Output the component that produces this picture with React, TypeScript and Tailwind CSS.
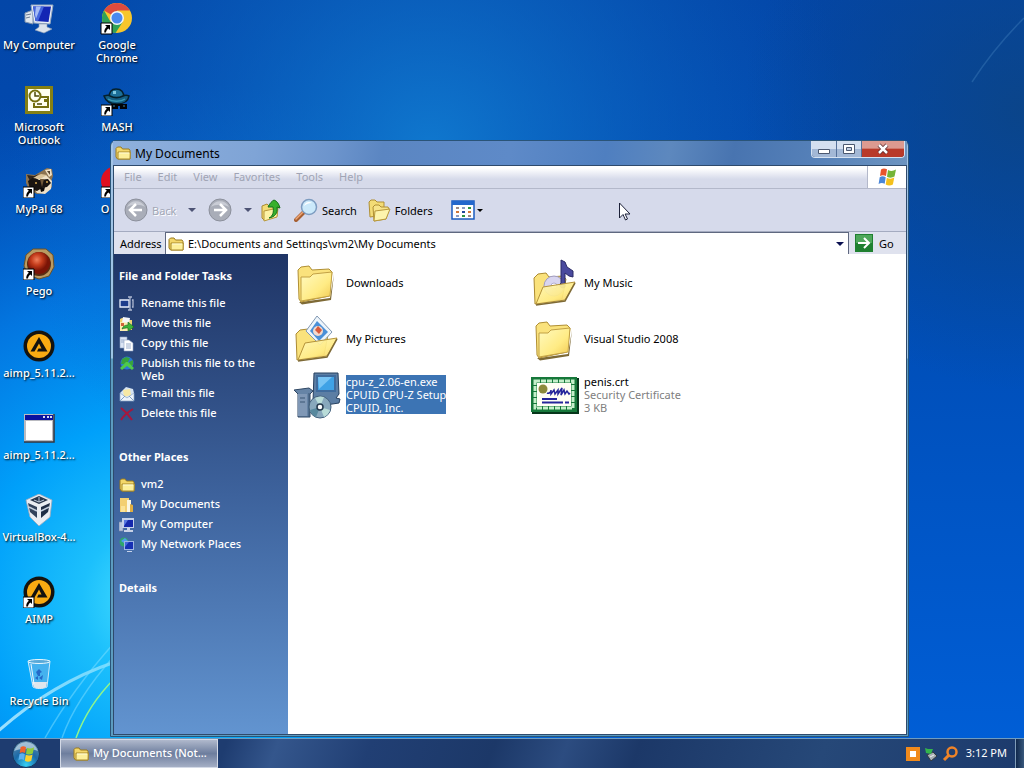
import type { ReactNode } from "react";

type IconProps = { className?: string };

/* ---------- desktop icons ---------- */

const ShortcutArrow = () => (
  <g>
    <path d="M0 21h11v11H0z" fill="#fff" stroke="#000" strokeWidth="1" />
    <path d="M4 23h5v5l-1.600-1.600C6 27.500 5.200 28.600 5 30.400H3.200c0-2.400.8-4.200 2.600-5.600z" fill="#000" />
  </g>
);

const MonitorIcon = () => (
  <svg viewBox="0 0 32 32" className="size-8" aria-hidden="true">
    <path d="M2 11l8-3v14l-8-2z" fill="#dfe6ee" stroke="#7f93ad" />
    <path d="M3 13l5-1M3 16l4-1" stroke="#6d7d94" />
    <path d="M8 3l22 0-3 19-16-1z" fill="#e6edf5" stroke="#93a6c0" />
    <path d="M10 4.500l18 0-2.500 15.500-13-1z" fill="#1426b4" />
    <path d="M10 4.500h11l-6 14.700-2.500-.2z" fill="#4466dc" />
    <path d="M13 4.500h5l-5 12-1-4z" fill="#a7bdf5" />
    <path d="M16 22l8 0 0 3 5 2-8 4-9-3 4-3z" fill="#dbe3ec" stroke="#8b9cb3" strokeWidth=".6" />
  </svg>
);

const ChromeIcon = () => (
  <svg viewBox="0 0 32 32" className="size-8 overflow-visible" aria-hidden="true">
    <circle cx="16" cy="16" r="15" fill="#f6c62c" />
    <path d="M16 16L3 8.500A15 15 0 0 1 29 8.500H16z" fill="#dd4b3e" />
    <path d="M3 8.500A15 15 0 0 0 14.500 31L22 19.500 16 16 9.500 19.700z" fill="#30a257" />
    <circle cx="16" cy="16" r="7" fill="#f4f6f4" />
    <circle cx="16" cy="16" r="5.500" fill="#4a8af0" />
    <ShortcutArrow />
  </svg>
);

const OutlookIcon = () => (
  <svg viewBox="0 0 32 32" className="size-8" aria-hidden="true">
    <path d="M2 2h28v28H2z" fill="#858014" />
    <path d="M5 5h22v22H5z" fill="#fffff0" />
    <path d="M17 13h8v10H11v-4" fill="#fffff0" stroke="#75700f" strokeWidth="2" />
    <circle cx="12" cy="12" r="5.500" fill="#fffff0" stroke="#75700f" strokeWidth="2" />
    <path d="M12 8v4h4M14 20h5" stroke="#4d4a09" strokeWidth="1.500" fill="none" />
    <path d="M21 15h3v3h-3z" fill="#75700f" />
  </svg>
);

const MashIcon = () => (
  <svg viewBox="0 0 32 32" className="size-8" aria-hidden="true">
    <path d="M8 14c0-6 2-9 7-9s8 3 8 9z" fill="#1c6f98" stroke="#05202c" strokeWidth="1.500" />
    <path d="M3 12c3-1 5-1 6 0 4 2 9 2 13 0 2-1 4-1 6 0-1 6-6 8-12 8S5 18 3 12z" fill="#155f84" stroke="#05202c" strokeWidth="1.500" />
    <path d="M7 15c4 3 13 3 17 0" stroke="#3a9ab4" strokeWidth="1.500" fill="none" />
    <path d="M12 7h3v3h-3z" fill="#7fc8e0" />
    <path d="M10 20h7v5h-7zM19 20h7v5h-7zM16 20h4v2h-4z" fill="#020408" />
    <path d="M12 22h2M22 22h2" stroke="#3e86a0" />
    <ShortcutArrow />
  </svg>
);

const RaccoonIcon = () => (
  <svg viewBox="0 0 32 32" className="size-8" aria-hidden="true">
    <path d="M3 8l9 1 12-7 5 1 1 7-2 6 1 5-7 6-8 1-8-4-3-7z" fill="#8c7351" />
    <path d="M4 9l7 1 5-2-9 7z" fill="#30251c" />
    <path d="M22 4l6-1 1 6-3 2z" fill="#f0e0c4" />
    <path d="M24 5l3 0 0 4z" fill="#5a4630" />
    <path d="M7 16l7-6 9-1 6 6-1 8-6 5-8-1z" fill="#efe1c7" />
    <path d="M5 15l6-4 5 3 9-1 3 4-4 4-5 1-5 3-7-2z" fill="#191411" />
    <path d="M10 12l8-4 6 1-7 4z" fill="#d9c298" />
    <path d="M17 13l2 8 2-8z" fill="#6f5738" />
    <circle cx="13" cy="17" r="1" fill="#d6a852" />
    <circle cx="24" cy="16" r="1" fill="#d6a852" />
    <path d="M17 22l5-1-1 4-3 1z" fill="#0b0908" />
    <ShortcutArrow />
  </svg>
);

const OperaIcon = () => (
  <svg viewBox="0 0 32 32" className="size-8" aria-hidden="true">
    <ellipse cx="16" cy="15" rx="16" ry="15" fill="#e0101f" />
    <ellipse cx="16" cy="15" rx="6" ry="11" fill="#fff" />
    <ShortcutArrow />
  </svg>
);

const PegoIcon = () => (
  <svg viewBox="0 0 32 32" className="size-8" aria-hidden="true">
    <defs>
      <radialGradient id="pego" cx=".4" cy=".35">
        <stop offset="0" stopColor="#f0805c" />
        <stop offset=".5" stopColor="#c43c1c" />
        <stop offset="1" stopColor="#7a1406" />
      </radialGradient>
    </defs>
    <path d="M10 1h13l7 6 1 12-5 9-10 3-11-4-4-9 2-11z" fill="#b99a62" stroke="#6b5127" />
    <circle cx="16" cy="16" r="12" fill="#5a2c12" />
    <circle cx="16" cy="15" r="11" fill="url(#pego)" />
    <ShortcutArrow />
  </svg>
);

const AimpIcon = ({ shortcut = false }: { shortcut?: boolean }) => (
  <svg viewBox="0 0 32 32" className="size-8" aria-hidden="true">
    <circle cx="16" cy="16" r="15.500" fill="#14130f" />
    <circle cx="16" cy="16" r="12" fill="#f9ab12" />
    <path d="M16 7l8.500 14.500H14l1.500-3h3L16 13.500 11.500 21.500h-4z" fill="#14130f" />
    {shortcut && <ShortcutArrow />}
  </svg>
);

const WindowIcon = () => (
  <svg viewBox="0 0 32 32" className="size-8" aria-hidden="true">
    <path d="M1 2h30v28H1z" fill="#b9bac0" />
    <path d="M31 2v28H1" fill="none" stroke="#33363f" strokeWidth="1.500" />
    <path d="M2 3h28v5H2z" fill="#0a12a0" />
    <path d="M3 9h26v19H3z" fill="#fff" />
    <path d="M20 4h2v2h-2zM24 4h2v2h-2zM27 4h2v2h-2z" fill="#d8dcf0" />
  </svg>
);

const VirtualBoxIcon = () => (
  <svg viewBox="0 0 32 32" className="size-8" aria-hidden="true">
    <path d="M16 0l13 6-2 17-11 9-9-9L3 6z" fill="#e9edf3" stroke="#9caabd" strokeWidth=".8" />
    <path d="M7 6l9-4 9 4-9 4z" fill="#28374d" />
    <path d="M5 9l9 4v11l-7-6z" fill="#31425c" />
    <path d="M27 9l-9 4v11l7-6z" fill="#1e2d46" />
    <path d="M11 6l5 2 5-2M16 3v5" stroke="#b8c6d8" fill="none" />
    <path d="M6 13l8 4M26 13l-8 4" stroke="#c3cfdf" strokeWidth="1.500" />
  </svg>
);

const RecycleIcon = () => (
  <svg viewBox="0 0 32 32" className="size-8" aria-hidden="true">
    <path d="M5 3l22 0-3 26c-4 2-11 2-14 0z" fill="#5cb4ea" fillOpacity=".7" stroke="#cfeafa" strokeWidth="1" />
    <path d="M9 24h15l-1 5c-4 2-9 2-12 0z" fill="#dfe6ec" />
    <ellipse cx="16" cy="3.500" rx="11" ry="2" fill="#58a9d8" stroke="#e9f8ff" />
    <path d="M8 6l3 20" stroke="#eefaff" strokeWidth="1" />
    <path d="M13 14l3-3 3 3-2 1v3h-2zM12 20l3-2v4zM20 17l-1 5-3-2z" fill="#2469c8" />
  </svg>
);

/* ---------- folder / toolbar icons ---------- */

const FolderSmall = ({ className = "size-4 shrink-0" }: IconProps) => (
  <svg viewBox="0 0 16 16" className={className} aria-hidden="true">
    <path d="M1 3.500L2.500 2H6l1.500 2H14l1 1.500V14H2.500L1 12z" fill="#f3d76a" stroke="#9a7a1e" />
    <path d="M3 7h12.300L15 14H3z" fill="#fdf09a" stroke="#a98a2a" />
    <path d="M4 8h10" stroke="#fffbd8" />
  </svg>
);

const FolderGradient = ({ id }: { id: string }) => (
  <defs>
    <linearGradient id={id} x1="0" y1="0" x2="1" y2="1">
      <stop offset="0" stopColor="#fffac0" />
      <stop offset=".6" stopColor="#ffeb84" />
      <stop offset="1" stopColor="#f0c850" />
    </linearGradient>
  </defs>
);

const FolderLarge = ({ id }: { id: string }) => (
  <svg viewBox="-1 -2 48 48" className="size-12" aria-hidden="true">
    <FolderGradient id={id} />
    <path d="M5 41l3 2.500 29-4.500 3-26-4 24-29 4z" fill="#7e6a36" />
    <path d="M5 38L4 9l3-3 8-1 3 4 17-1 3 3-3 24L7 41z" fill="#fae27c" stroke="#b08f34" />
    <path d="M7 16h9l3-3 19-2-2 24-29 5z" fill={`url(#${id})`} stroke="#c2a145" />
  </svg>
);

const OpenFolder = ({ children, id }: { children: ReactNode; id: string }) => (
  <svg viewBox="0 0 48 48" className="size-12" aria-hidden="true">
    <FolderGradient id={id} />
    <path d="M4 45L3 19l4-4 8-1 3 4 14-1 3 3-4 20z" fill="#fae27c" stroke="#ac8b32" />
    {children}
    <path d="M5 45l7-17 32-5-10 18z" fill={`url(#${id})`} fillOpacity=".92" stroke="#b59339" />
    <path d="M5 46l29-4 10-18" fill="none" stroke="#7e6a36" strokeWidth="1.500" />
  </svg>
);

const MusicFolder = () => (
  <OpenFolder id="folder-music">
    <circle cx="23" cy="27" r="10" fill="#d8d5f0" stroke="#a29dc4" />
    <circle cx="23" cy="27" r="3" fill="#fff" stroke="#b4b0d2" />
    <path d="M30 1l4 2 2 5 6 4v6l-4-1-4-3v14c-3 2-6 0-5-3l1-1z" fill="#4a4a9e" stroke="#2b2b66" />
  </OpenFolder>
);

const PicturesFolder = () => (
  <OpenFolder id="folder-pictures">
    <path d="M24 1l15 16-12 13-14-14z" fill="#eef5fb" stroke="#8299b4" />
    <path d="M24 6l11 11-9 9-9-10z" fill="#4a90d8" />
    <circle cx="25" cy="16" r="5" fill="#f3d9cc" />
    <path d="M22 15l3-4 4 4-3 4z" fill="#d85a3c" />
  </OpenFolder>
);

const SetupIcon = () => (
  <svg viewBox="0 0 48 48" className="size-12" aria-hidden="true">
    <path d="M21 2h24l1 21-3 4 4 1-1 4-20 3-6-5z" fill="#5c7ea4" stroke="#27405f" />
    <path d="M23 4h20v17H23z" fill="#3f6b9c" />
    <path d="M25 6h16v13H25z" fill="#3fa2e6" />
    <path d="M25 6h14L26 18z" fill="#78c4f4" />
    <path d="M1 19l15-2 4 3-3 3v23H5V23z" fill="#6684a6" stroke="#2f4764" />
    <path d="M5 23h9v22H5z" fill="#8098b6" />
    <path d="M16 22v24M7 27h5M7 31h5" stroke="#3b5675" />
    <circle cx="27" cy="36" r="11" fill="#88a8bc" stroke="#42607c" />
    <path d="M27 36l-5-9a11 11 0 0 1 9-1zM27 36l10 3a11 11 0 0 1-6 7z" fill="#b9dcd8" />
    <path d="M27 36l-10 3a11 11 0 0 0 6 7z" fill="#58899e" />
    <circle cx="27" cy="36" r="3" fill="#fff" stroke="#24384c" strokeWidth="1.500" />
  </svg>
);

const CertificateIcon = () => (
  <svg viewBox="0 0 48 48" className="size-12" aria-hidden="true">
    <path d="M1 7h47v36H1z" fill="#06361a" />
    <path d="M0 6h46v35H0z" fill="#16783a" />
    <path d="M4 10h38v27H4z" fill="none" stroke="#c5efca" strokeWidth="3" strokeDasharray="5 1" />
    <path d="M6 12h34v23H6z" fill="#fffef4" />
    <circle cx="12" cy="18" r="4.500" fill="#8c8a3c" />
    <path d="M16 22c2 1 4-1 4-3l0 4 3-4 1 4 3-4v4l4-6-1 7 3-5 1 4 2-3 2 3 1-1" fill="none" stroke="#25259a" strokeWidth="1.500" />
    <path d="M11 28h15M11 31.500h21M34 31.500h4" stroke="#25259a" strokeWidth="2" />
  </svg>
);

const RoundArrow = ({ flip = false }: { flip?: boolean }) => (
  <svg viewBox="0 0 24 24" className={flip ? "size-6 -scale-x-100" : "size-6"} aria-hidden="true">
    <circle cx="12" cy="12" r="11" fill="#a9adb8" stroke="#8c909c" />
    <path d="M3 9a10 10 0 0 1 18 0c-4-3-13-3-18 0z" fill="#c9ccd5" />
    <path d="M12 6l-6 6 6 6M6.500 12H18" fill="none" stroke="#fff" strokeWidth="2.500" />
  </svg>
);

const UpFolderIcon = () => (
  <svg viewBox="0 0 24 24" className="size-6" aria-hidden="true">
    <path d="M2 8l5-2 2 2 7-1 1 11-13 4-2-2z" fill="#f3dc76" stroke="#aa8a2e" />
    <path d="M4 13l14-3-1 9-13 4z" fill="#fdf3a4" stroke="#b8983a" />
    <path d="M9 20c4-2 5-6 4-11H8c2-4 4-6 6-7 3 1 5 4 6 8l-3-1c1 6-2 10-8 11z" fill="#38b02c" stroke="#14701a" />
  </svg>
);

const SearchIcon = () => (
  <svg viewBox="0 0 24 24" className="size-6" aria-hidden="true">
    <path d="M2 22l8-8" stroke="#a65f32" strokeWidth="4" strokeLinecap="round" />
    <path d="M2 21l7-7" stroke="#efa676" strokeWidth="1.500" strokeLinecap="round" />
    <circle cx="15" cy="9" r="7.500" fill="#cbe9fa" stroke="#7d9cc0" strokeWidth="1.500" />
    <path d="M10 8c1-4 5-5 8-3-3 0-6 1-8 3z" fill="#fff" />
  </svg>
);

const FoldersIcon = () => (
  <svg viewBox="0 0 24 24" className="size-6" aria-hidden="true">
    <path d="M2 4l2-2h4l2 2h7v13L3 19z" fill="#f3dc76" stroke="#b08f34" />
    <path d="M6 9l2-2h4l2 2h7l1 2-3 10-12 2z" fill="#f7e48a" stroke="#b08f34" />
    <path d="M8 13l15-2-4 10-12 2z" fill="#fdf4ac" stroke="#b8983a" />
  </svg>
);

const ViewsIcon = () => (
  <svg viewBox="0 0 24 20" className="h-5 w-6" aria-hidden="true">
    <path d="M1 1h22v18H1z" fill="#fff" stroke="#1b5cc0" strokeWidth="1.500" />
    <path d="M1 1h22v4H1z" fill="#2468cc" />
    <path d="M5 7h3v2H5zM17 15h3v2h-3z" fill="#9c8a86" />
    <path d="M11 7h3v2h-3zM5 15h3v2H5z" fill="#8c9cc0" />
    <path d="M17 7h3v2h-3zM11 15h3v2h-3z" fill="#2c9440" />
    <path d="M5 11h3v2H5zM17 11h3v2h-3z" fill="#d07838" />
    <path d="M11 11h3v2h-3z" fill="#20489c" />
  </svg>
);

const WindowsFlag = () => (
  <svg viewBox="0 0 20 20" className="size-5" aria-hidden="true">
    <path d="M4 2.500c2-1.500 4-1.300 6-.2L9 9c-2-1.100-4-1.200-6 0z" fill="#e8552c" />
    <path d="M11 3c2.500 1.300 5 1.200 8-.4L17.500 9.500c-2.500 1.500-5 1.500-7.500.2z" fill="#74b436" />
    <path d="M2.700 10.200c2-1.300 4-1.100 6 0l-1 6.600c-2-1.200-4-1.100-6.100.2z" fill="#4a86d8" />
    <path d="M9.800 10.800c2.500 1.200 5 1.200 7.500-.2l-1.400 7c-2.500 1.300-5 1.200-7.200 0z" fill="#f4c01c" />
  </svg>
);

const Caret = ({ className = "h-1 w-2" }: IconProps) => (
  <svg viewBox="0 0 8 4" className={className} aria-hidden="true">
    <path d="M0 0h8L4 4z" fill="currentColor" />
  </svg>
);

/* ---------- task pane icons ---------- */

const RenameIcon = () => (
  <svg viewBox="0 0 16 16" className="size-4" aria-hidden="true">
    <path d="M1 4h9v7H1z" fill="#1c3c8c" stroke="#e8eefb" strokeWidth="1.300" />
    <path d="M9 1h4M9 14h4M11 1v13M13 4h1v7h-1" fill="none" stroke="#aeb9d2" strokeWidth="1.300" />
  </svg>
);

const MoveIcon = () => (
  <svg viewBox="0 0 16 16" className="size-4" aria-hidden="true">
    <path d="M1 3l2-1h3l1 2h6v10H1z" fill="#efd372" />
    <path d="M4 1l7 1-1 6-7-1z" fill="#f5f7fb" />
    <path d="M1 6l11 1-2 8H1z" fill="#fbeeb0" />
    <path d="M3 13c1-3 3-4 6-4V6l6 5-6 4v-3c-2 0-4 0-6 1z" fill="#3db43a" stroke="#155e1c" strokeWidth=".6" />
    <path d="M2 7h3v3H2z" fill="#d0643c" />
  </svg>
);

const CopyIcon = () => (
  <svg viewBox="0 0 16 16" className="size-4" aria-hidden="true">
    <path d="M1 1h7v11H1z" fill="#dce5f4" stroke="#8fa2c4" strokeWidth=".6" />
    <path d="M5 4h5l4 3v8H5z" fill="#fff" stroke="#8fa2c4" strokeWidth=".6" />
    <path d="M2 4h3M2 6h3M7 8h5M7 10h5M7 12h5" stroke="#9aaccb" />
  </svg>
);

const PublishIcon = () => (
  <svg viewBox="0 0 16 16" className="size-4" aria-hidden="true">
    <circle cx="8" cy="7" r="6.500" fill="#2b78d6" />
    <path d="M3 3l4-2 4 1-2 4-4 2-3 0zM10 6l4-2v5l-3 2z" fill="#37a23c" />
    <path d="M1 12l6-6h2l6 6-2 2-5-4-5 4z" fill="#4fca4a" />
  </svg>
);

const MailIcon = () => (
  <svg viewBox="0 0 16 16" className="size-4" aria-hidden="true">
    <path d="M1 7l6-6 7 2 1 4v8H1z" fill="#d5e3f3" />
    <path d="M4 4l7-1 1 6-7 2z" fill="#f7e8a4" />
    <path d="M1 7l7 5 7-5v8H1z" fill="#eef4fb" stroke="#8aa6c8" strokeWidth=".7" />
    <path d="M1 15l5-5M15 15l-5-5" stroke="#7fa0c4" />
  </svg>
);

const DeleteIcon = () => (
  <svg viewBox="0 0 16 16" className="size-4" aria-hidden="true">
    <path d="M2 2c4 3 8 7 11 12M14 3C9 6 5 9 2 14" fill="none" stroke="#a8163c" strokeWidth="2" />
  </svg>
);

const DocumentsIcon = () => (
  <svg viewBox="0 0 16 16" className="size-4" aria-hidden="true">
    <path d="M1 1h9v14H1z" fill="#f3cf72" />
    <path d="M8 3h4v12H8z" fill="#fbf6e2" />
    <path d="M11 7l3 1v7h-3z" fill="#dfae42" />
    <path d="M2 9h4v6H2z" fill="#fbe398" />
  </svg>
);

const ComputerIcon = () => (
  <svg viewBox="0 0 16 16" className="size-4" aria-hidden="true">
    <path d="M0 5h4v9H0z" fill="#b8c4dc" stroke="#7888a8" strokeWidth=".6" />
    <path d="M3 1h12v10H3z" fill="#c3d0ea" />
    <path d="M5 3h9v7H5z" fill="#1428ac" />
    <path d="M5 3h4l-4 6z" fill="#5878e0" />
    <path d="M8 11h3v2h3v2H5v-2h3z" fill="#c8d2e6" />
  </svg>
);

const NetworkIcon = () => (
  <svg viewBox="0 0 16 16" className="size-4" aria-hidden="true">
    <circle cx="5" cy="5" r="4.500" fill="#2fa66c" />
    <path d="M2 4l4-3 3 3-4 2z" fill="#4f9cf0" />
    <path d="M5 4h10v9H5z" fill="#9cb4e4" />
    <path d="M6 5h8v7H6z" fill="#1630b4" />
    <path d="M6 5h4l-4 5z" fill="#4468dc" />
    <path d="M8 14h5v1H8z" fill="#c6d2ea" />
  </svg>
);

/* ---------- data ---------- */

const shortcuts = [
  { name: "My Computer", icon: <MonitorIcon /> },
  { name: "Microsoft\nOutlook", icon: <OutlookIcon /> },
  { name: "MyPal 68", icon: <RaccoonIcon /> },
  { name: "Pego", icon: <PegoIcon /> },
  { name: "aimp_5.11.2...", icon: <AimpIcon /> },
  { name: "aimp_5.11.2...", icon: <WindowIcon /> },
  { name: "VirtualBox-4...", icon: <VirtualBoxIcon /> },
  { name: "AIMP", icon: <AimpIcon shortcut /> },
  { name: "Recycle Bin", icon: <RecycleIcon /> },
  { name: "Google\nChrome", icon: <ChromeIcon /> },
  { name: "MASH", icon: <MashIcon /> },
  { name: "Opera", icon: <OperaIcon /> },
];

const menus = ["File", "Edit", "View", "Favorites", "Tools", "Help"];

const tasks = [
  { name: "Rename this file", icon: <RenameIcon /> },
  { name: "Move this file", icon: <MoveIcon /> },
  { name: "Copy this file", icon: <CopyIcon /> },
  { name: "Publish this file to the Web", icon: <PublishIcon /> },
  { name: "E-mail this file", icon: <MailIcon /> },
  { name: "Delete this file", icon: <DeleteIcon /> },
];

const places = [
  { name: "vm2", icon: <FolderSmall /> },
  { name: "My Documents", icon: <DocumentsIcon /> },
  { name: "My Computer", icon: <ComputerIcon /> },
  { name: "My Network Places", icon: <NetworkIcon /> },
];

const files = [
  { name: "Downloads", icon: <FolderLarge id="folder-downloads" /> },
  { name: "My Music", icon: <MusicFolder /> },
  { name: "My Pictures", icon: <PicturesFolder /> },
  { name: "Visual Studio 2008", icon: <FolderLarge id="folder-vs" /> },
  { name: "cpu-z_2.06-en.exe", info: ["CPUID CPU-Z Setup", "CPUID, Inc."], icon: <SetupIcon />, selected: true },
  { name: "penis.crt", info: ["Security Certificate", "3 KB"], icon: <CertificateIcon /> },
];

/* ---------- parts ---------- */

const Wallpaper = () => (
  <svg className="absolute inset-0 size-full" viewBox="0 0 1024 768" preserveAspectRatio="none" aria-hidden="true">
    <defs>
      <linearGradient id="base" x1="0" y1="0" x2="0" y2="1">
        <stop offset="0" stopColor="#0346a8" />
        <stop offset=".35" stopColor="#004cb4" />
        <stop offset="1" stopColor="#005fd8" />
      </linearGradient>
      <radialGradient id="glow" gradientUnits="userSpaceOnUse" cx="160" cy="600" r="520">
        <stop offset="0" stopColor="#50e4ff" />
        <stop offset=".15" stopColor="#1cc0fc" />
        <stop offset=".35" stopColor="#00a0fa" />
        <stop offset=".6" stopColor="#0480ea" stopOpacity=".8" />
        <stop offset="1" stopColor="#0460cc" stopOpacity="0" />
      </radialGradient>
      <radialGradient id="top" gradientUnits="userSpaceOnUse" cx="430" cy="150" r="420">
        <stop offset="0" stopColor="#1280d4" stopOpacity=".85" />
        <stop offset="1" stopColor="#0b60c0" stopOpacity="0" />
      </radialGradient>
      <radialGradient id="corner" gradientUnits="userSpaceOnUse" cx="1024" cy="110" r="280">
        <stop offset="0" stopColor="#0c4484" stopOpacity=".85" />
        <stop offset="1" stopColor="#0c4484" stopOpacity="0" />
      </radialGradient>
      <linearGradient id="beam" x1="0" y1="1" x2="1" y2="0">
        <stop offset="0" stopColor="#c8f4ff" stopOpacity=".8" />
        <stop offset="1" stopColor="#c8f4ff" stopOpacity=".5" />
      </linearGradient>
    </defs>
    <path d="M0 0h1024v768H0z" fill="url(#base)" />
    <path d="M0 0h1024v768H0z" fill="url(#glow)" />
    <path d="M0 0h1024v768H0z" fill="url(#top)" />
    <path d="M0 0h1024v768H0z" fill="url(#corner)" />
    <path d="M972 82Q994 48 1024 18" fill="none" stroke="#7fc0ec" strokeOpacity=".2" strokeWidth="1.500" />
    <path d="M-5 734Q50 684 115 662" fill="none" stroke="url(#beam)" strokeWidth="3" />
    <path d="M45 738Q72 690 115 642M62 738Q75 700 115 655" fill="none" stroke="#7fe0ff" strokeOpacity=".5" strokeWidth="1.500" />
    <path d="M76 738Q88 705 115 678" fill="none" stroke="#8ff58c" strokeWidth="1.500" />
  </svg>
);

interface PaneSectionProps {
  title: string;
  items: { name: string; icon: ReactNode }[];
}

const PaneSection = ({ title, items }: PaneSectionProps) => (
  <section>
    <h2 className="font-bold">{title}</h2>
    {items.length > 0 && (
      <ul className="mt-3.5 flex flex-col gap-1">
        {items.map((item) => (
          <li key={item.name}>
            <a href="#" className="flex min-h-4 items-start gap-1.5 font-medium">
              <span className="shrink-0">{item.icon}</span>
              <span>{item.name}</span>
            </a>
          </li>
        ))}
      </ul>
    )}
  </section>
);

const TitleBar = () => (
  <header className="flex h-6 items-start bg-[linear-gradient(100deg,#8fb0dc_0%,#7fa4d6_18%,#6c94cc_28%,#5b86c2_34%,#5e8ac8_50%,#4f7fc0_62%,#5d88be_70%,#4874b0_78%,#5580b8_88%,#6c94c0_100%)]">
    <div className="flex h-6 flex-1 items-center gap-1 pl-0.5">
      <FolderSmall />
      <h1 className="text-[12px] text-black">My Documents</h1>
    </div>
    <div className="mr-0.5 flex h-[17px] overflow-hidden rounded-b border border-t-0 border-[#d5e2f2] bg-[#34507c]">
      <button aria-label="Minimize" className="flex w-6 items-center justify-center bg-linear-to-b from-[#d3dff0] from-50% to-[#a3b8d6] to-50%">
        <svg viewBox="0 0 12 12" className="size-3" aria-hidden="true">
          <path d="M.5 6.500h11v4H.5z" fill="#fff" stroke="#4b5870" />
        </svg>
      </button>
      <button aria-label="Maximize" className="flex w-[26px] items-center justify-center border-x border-[#54709a] bg-linear-to-b from-[#d3dff0] from-50% to-[#a3b8d6] to-50%">
        <svg viewBox="0 0 12 12" className="size-3" aria-hidden="true">
          <path d="M.5 1.500h11v9H.5z" fill="#fff" stroke="#4b5870" />
          <path d="M3.500 4.500h5v3h-5z" fill="#c3d0e4" stroke="#4b5870" />
        </svg>
      </button>
      <button aria-label="Close" className="flex w-[42px] items-center justify-center bg-linear-to-b from-[#dc9a90] from-45% to-[#b83a2a] to-50%">
        <svg viewBox="0 0 12 12" className="size-3" aria-hidden="true">
          <path d="M2 2l8 8M10 2l-8 8" stroke="#5c2a2c" strokeWidth="4" />
          <path d="M2 2l8 8M10 2l-8 8" stroke="#fff" strokeWidth="2.500" />
        </svg>
      </button>
    </div>
  </header>
);

const Toolbar = () => (
  <div className="flex h-[43px] items-center border-b border-[#a4abc0] bg-[#d6daeb] pl-2.5">
    <button className="flex items-center gap-1 text-[#a3a7b6]">
      <RoundArrow />
      <span className="w-9 text-left [text-shadow:1px_1px_0_#fff]">Back</span>
    </button>
    <button aria-label="Back history" className="flex w-5 justify-start text-[#4d5374]">
      <Caret />
    </button>
    <button aria-label="Forward">
      <RoundArrow flip />
    </button>
    <button aria-label="Forward history" className="ml-3 flex w-4 text-[#4d5374]">
      <Caret />
    </button>
    <button aria-label="Up">
      <UpFolderIcon />
    </button>
    <button className="ml-2.5 flex items-center gap-1">
      <SearchIcon />
      Search
    </button>
    <button className="ml-2.5 flex items-center gap-1">
      <FoldersIcon />
      Folders
    </button>
    <button aria-label="Views" className="ml-[18px] flex items-center gap-0.5">
      <ViewsIcon />
      <Caret className="h-[3px] w-1.5" />
    </button>
  </div>
);

const AddressBar = () => (
  <form className="flex h-[22px] items-center bg-[#dfe2ee] pl-1.5">
    <label htmlFor="address" className="w-[45px]">
      Address
    </label>
    <div className="flex h-full flex-1 items-center border border-b-0 border-[#5f6880] bg-white px-0.5">
      <FolderSmall />
      <input
        id="address"
        defaultValue="E:\Documents and Settings\vm2\My Documents"
        className="ml-1 min-w-0 flex-1 bg-transparent outline-none"
      />
      <button type="button" aria-label="Address history" className="px-0.5 text-[#0b1050]">
        <Caret />
      </button>
    </div>
    <button type="button" className="ml-1.5 flex w-[51px] items-center gap-1.5">
      <svg viewBox="0 0 18 18" className="size-[18px]" aria-hidden="true">
        <path d="M0 0h18v18H0z" fill="#1f8030" />
        <path d="M1 1h16v8H1z" fill="#4ea75a" />
        <path d="M3 9h11M9 4l5 5-5 5" fill="none" stroke="#fff" strokeWidth="2" />
      </svg>
      Go
    </button>
  </form>
);

const Explorer = () => (
  <section
    aria-label="My Documents"
    className="absolute top-[140px] right-[115px] bottom-px left-[110px] flex flex-col rounded-t-md border border-[#2a5478] bg-[linear-gradient(#a3c4e6_0px,#9cc4e4_217px,#5c9cc0_218px)] pr-px pb-px pl-0.5 text-[11px] leading-[13px] text-black"
  >
    <TitleBar />
    <div className="flex flex-1 flex-col border border-[#2e4a6c] bg-white">
      <nav className="flex h-[23px] border-b border-[#b3b8ca] bg-linear-to-b from-white from-10% to-[#d6daea] to-60%">
        <div className="flex flex-1 items-center gap-4 pb-px pl-2.5 text-[#a0a4b4]">
          {menus.map((menu) => (
            <button key={menu}>{menu}</button>
          ))}
        </div>
        <div className="flex w-[39px] items-center justify-center border-l border-[#b3b8ca] bg-white">
          <WindowsFlag />
        </div>
      </nav>
      <Toolbar />
      <AddressBar />
      <div className="flex flex-1">
        <aside className="flex w-[174px] flex-col gap-7 bg-linear-to-b from-[#1f3566] via-[#3d629c] to-[#6294d0] pt-[15px] pr-4 pl-[5px] text-white">
          <PaneSection title="File and Folder Tasks" items={tasks} />
          <PaneSection title="Other Places" items={places} />
          <PaneSection title="Details" items={[]} />
        </aside>
        <ul className="grid flex-1 auto-rows-[56px] grid-cols-[repeat(auto-fill,238px)] content-start pt-px pl-[5px]">
          {files.map((file) => (
            <li key={file.name} className="flex">
              <button className="flex items-center gap-[5px] text-left">
                {file.icon}
                <span className={file.selected ? "mb-0.5 bg-[#3c74b4] text-white" : "mb-0.5 text-black"}>
                  <span className="block">{file.name}</span>
                  {file.info?.map((line) => (
                    <span key={line} className={file.selected ? "block" : "block text-[#808080]"}>
                      {line}
                    </span>
                  ))}
                </span>
              </button>
            </li>
          ))}
        </ul>
      </div>
    </div>
  </section>
);

const Taskbar = () => (
  <footer className="relative flex h-[30px] items-stretch border-t border-[#6f9cc0] bg-[linear-gradient(110deg,#1e3c70_0%,#1e3c70_22%,#34568c_27%,#213f74_36%,#1c3868_48%,#2c4c80_55%,#1c3868_62%,#264878_80%,#1c3a6c_100%)] text-[11px] text-white">
    <button aria-label="Start" className="flex w-[60px] items-center pl-3">
      <svg viewBox="0 0 28 28" className="size-7" aria-hidden="true">
        <defs>
          <radialGradient id="orb" cx=".5" cy=".9" r=".9">
            <stop offset="0" stopColor="#36d0f4" />
            <stop offset=".5" stopColor="#1b6aa8" />
            <stop offset="1" stopColor="#5f88a8" />
          </radialGradient>
        </defs>
        <circle cx="14" cy="14" r="13.500" fill="url(#orb)" stroke="#17365c" />
        <path d="M2 11a12.500 12.500 0 0 1 24 0c-8-3-16-3-24 0z" fill="#dcebf4" fillOpacity=".6" />
        <g transform="translate(5 5) scale(.9)">
          <path d="M4 2.500c2-1.500 4-1.300 6-.2L9 9c-2-1.100-4-1.200-6 0z" fill="#f0622c" />
          <path d="M11 3c2.500 1.300 5 1.200 8-.4L17.500 9.500c-2.500 1.500-5 1.500-7.500.2z" fill="#8fcc3c" />
          <path d="M2.700 10.200c2-1.300 4-1.100 6 0l-1 6.600c-2-1.200-4-1.100-6.100.2z" fill="#5cb0f0" />
          <path d="M9.800 10.800c2.500 1.200 5 1.200 7.500-.2l-1.400 7c-2.500 1.300-5 1.200-7.200 0z" fill="#fcd02c" />
        </g>
      </svg>
    </button>
    <button className="flex w-[158px] items-center gap-1 border border-[#d3d9e6] bg-linear-to-b from-[#b0b9cc] via-[#6e7e9e] to-[#a4aec4] pl-3 font-medium whitespace-nowrap">
      <FolderSmall />
      My Documents (Not...
    </button>
    <div className="ml-auto flex items-center gap-1">
      <svg viewBox="0 0 14 14" className="size-3.5" aria-hidden="true">
        <path d="M0 0h14v14H0z" fill="#f08a1c" />
        <path d="M4 4h6v6H4z" fill="#fff" />
      </svg>
      <svg viewBox="0 0 14 14" className="size-3.5" aria-hidden="true">
        <path d="M3 8l6-3 4 4-6 5z" fill="#a8aeb4" stroke="#30383f" />
        <path d="M1 1l3 1 5 0-2 5-5-1z" fill="#34b44c" />
        <path d="M6 10l4-2" stroke="#eee" />
      </svg>
      <svg viewBox="0 0 16 16" className="size-4" aria-hidden="true">
        <circle cx="10" cy="6" r="4.500" fill="none" stroke="#f08428" strokeWidth="2.500" />
        <path d="M7 9l-5 5" stroke="#f08428" strokeWidth="3" />
      </svg>
      <time className="ml-1">3:12 PM</time>
      <button aria-label="Show desktop" className="ml-1 h-full w-[9px] border-l border-[#7f9cb8] bg-linear-to-r from-[#10284c] to-[#38587c]" />
    </div>
  </footer>
);

export default function App() {
  return (
    <div className="relative flex min-h-screen flex-col overflow-hidden bg-[#0058c4] font-['Noto_Sans','Open_Sans',sans-serif]">
      <Wallpaper />
      <main className="relative flex-1">
        <ul className="grid grid-flow-col auto-cols-[78px] grid-rows-[repeat(9,82px)] justify-start">
          {shortcuts.map((item, i) => (
            <li key={i}>
              <button className="flex w-full flex-col items-center gap-1 pt-0.5 text-[11px] leading-[13px] font-medium text-white [text-shadow:1px_1px_2px_#000]">
                {item.icon}
                <span className="text-center whitespace-pre">{item.name}</span>
              </button>
            </li>
          ))}
        </ul>
        <Explorer />
        <svg viewBox="0 0 12 19" className="absolute top-[202px] left-[619px] h-[19px] w-3" aria-hidden="true">
          <path d="M.5 1v15l3.500-3.500L6.500 18l2-1-2.400-5H11z" fill="#fff" stroke="#1c2038" />
        </svg>
      </main>
      <Taskbar />
    </div>
  );
}
